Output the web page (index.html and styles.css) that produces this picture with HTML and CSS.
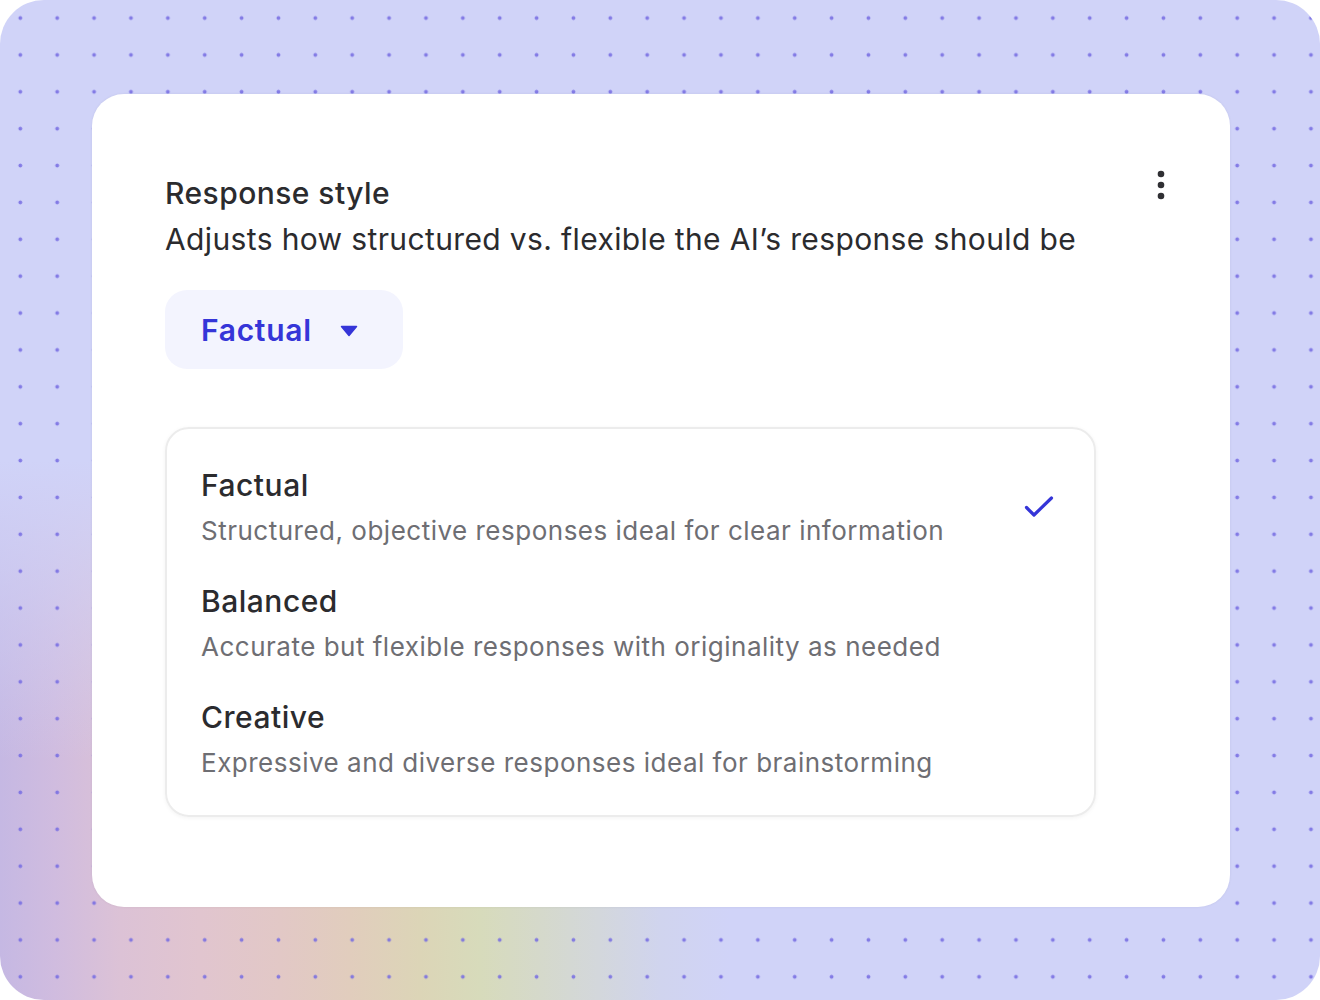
FILE: index.html
```html
<!DOCTYPE html>
<html lang="en">
<head>
<meta charset="utf-8">
<title>Response style</title>
<link rel="stylesheet" href="styles.css">
</head>
<body>
<div class="frame">
  <div class="card">
    <div class="header">
      <div class="header-text">
        <h1 class="title">Response style</h1>
        <p class="subtitle">Adjusts how structured vs. flexible the AI’s response should be</p>
      </div>
      <button class="kebab" aria-label="More options">
        <svg width="8" height="30" viewBox="0 0 8 30"><circle cx="4" cy="4" r="3.3" fill="#2f2f33"/><circle cx="4" cy="15" r="3.3" fill="#2f2f33"/><circle cx="4" cy="26" r="3.3" fill="#2f2f33"/></svg>
      </button>
    </div>
    <button class="select">
      <span class="select-label">Factual</span>
      <svg class="caret" width="18" height="12" viewBox="0 0 18 12"><path d="M1.5 1.5 H16.5 L9 10.5 Z" fill="#3535d8" stroke="#3535d8" stroke-width="1.5" stroke-linejoin="round"/></svg>
    </button>
    <div class="menu">
      <div class="option selected">
        <div class="option-text">
          <div class="option-title">Factual</div>
          <div class="option-desc">Structured, objective responses ideal for clear information</div>
        </div>
        <svg class="check" width="30" height="24" viewBox="0 0 30 24"><path d="M2.5 12.5 L10 20 L27.5 3" fill="none" stroke="#3535d8" stroke-width="3.2" stroke-linecap="round" stroke-linejoin="round"/></svg>
      </div>
      <div class="option">
        <div class="option-text">
          <div class="option-title">Balanced</div>
          <div class="option-desc">Accurate but flexible responses with originality as needed</div>
        </div>
      </div>
      <div class="option">
        <div class="option-text">
          <div class="option-title">Creative</div>
          <div class="option-desc">Expressive and diverse responses ideal for brainstorming</div>
        </div>
      </div>
    </div>
  </div>
</div>
</body>
</html>
```

FILE: styles.css
```css
* { box-sizing: border-box; }
html, body { margin: 0; padding: 0; background: #ffffff; }
body { font-family: Inter, "Noto Sans", "Liberation Sans", sans-serif; }

.frame {
  width: 1320px;
  height: 1000px;
  border-radius: 44px;
  overflow: hidden;
  padding: 94px 90px 93px 92px;
  background-color: #d0d3f8;
  background-image:
    radial-gradient(circle at 50% 50%, rgba(118,108,226,0.85) 1.6px, rgba(118,108,226,0) 2.3px),
    linear-gradient(to bottom, #d0d3f8 0px, #d0d3f8 460px, rgba(208,211,248,0) 760px),
    linear-gradient(to right, #c5b8e3 0px, #d0bcdf 55px, #dcc2d6 120px, #e1c5cf 200px, #e2c8c6 280px, #e1cdbd 350px, #dcd5b7 420px, #d7dbbb 480px, #d5d9cb 540px, #d3d7dc 600px, #d0d4ee 660px, #d0d3f8 730px);
  background-size: 36.88px 36.88px, 100% 100%, 100% 100%;
  background-position: 1.9px -0.4px, 0 0, 0 0;
  background-repeat: repeat, no-repeat, no-repeat;
}

.card {
  width: 1138px;
  height: 813px;
  background: #ffffff;
  border-radius: 32px;
  box-shadow: 0 0 3px rgba(0,0,0,0.06);
  padding: 76px 60px 0 73px;
  display: flex;
  flex-direction: column;
  align-items: flex-start;
}

.header {
  width: 100%;
  display: flex;
  justify-content: space-between;
  align-items: flex-start;
}

.title {
  margin: 0;
  font-size: 30px;
  line-height: 46px;
  font-weight: 500;
  color: #2b2b2e;
  letter-spacing: 0.45px;
}

.subtitle {
  margin: 0;
  font-size: 30px;
  line-height: 46px;
  font-weight: 400;
  color: #2b2b2e;
  letter-spacing: 0.37px;
}

.kebab {
  border: 0;
  background: none;
  padding: 0;
  margin-top: 0;
  margin-right: 5px;
  display: flex;
}

.select {
  margin-top: 28px;
  width: 238px;
  height: 79px;
  border: 0;
  border-radius: 22px;
  background: #f3f4fe;
  display: flex;
  align-items: center;
  padding: 0 0 0 36px;
  gap: 28px;
  font-family: inherit;
  cursor: pointer;
}

.select-label {
  font-size: 30px;
  font-weight: 600;
  color: #3535d8;
  letter-spacing: 0.7px;
}

.caret { margin-top: 2px; }

.menu {
  margin-top: 58px;
  width: 931px;
  height: 390px;
  border: 2px solid #ececec;
  border-radius: 24px;
  box-shadow: 0 1px 4px rgba(0,0,0,0.05);
  padding: 34px 40px 0 34px;
  display: flex;
  flex-direction: column;
  gap: 24px;
}

.option {
  display: flex;
  align-items: center;
  justify-content: space-between;
}

.option-title {
  font-size: 30px;
  line-height: 44px;
  font-weight: 500;
  color: #2b2b2e;
  letter-spacing: 0.5px;
}

.option-desc {
  font-size: 26px;
  line-height: 48px;
  font-weight: 400;
  color: #6e6e73;
  letter-spacing: 0.5px;
}

.check { margin-top: -4px; }
```
